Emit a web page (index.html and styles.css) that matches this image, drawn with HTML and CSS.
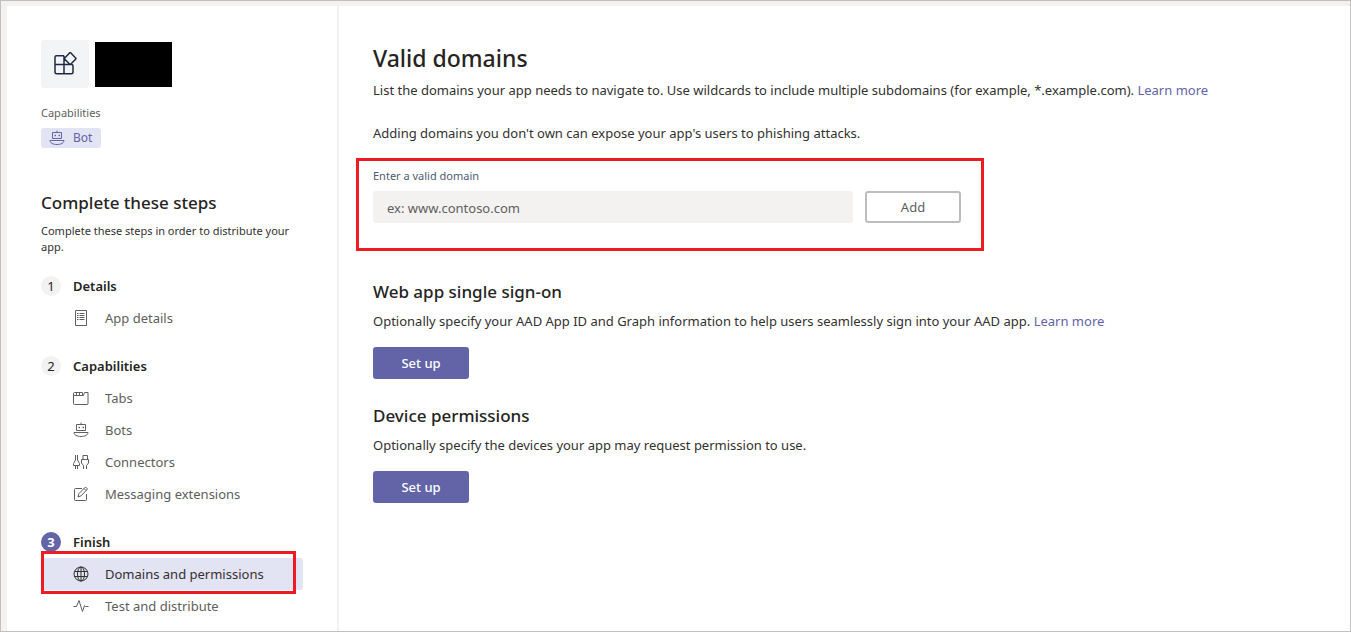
FILE: index.html
```html
<!DOCTYPE html>
<html lang="en">
<head>
<meta charset="utf-8">
<title>Domains and permissions</title>
<link rel="stylesheet" href="styles.css">
</head>
<body>
<svg class="sprite" aria-hidden="true">
  <symbol id="bot" viewBox="0 0 16 16">
    <path d="M8 .5v2M3.500 2.500h9v6h-9zM1 10.500h14c0 2.500-3 4-7 4s-7-1.500-7-4z"/>
    <path d="M5.500 5.500h1.500M9.500 5.500h1.500" stroke-width="1.600"/>
  </symbol>
</svg>
<div class="app">
  <aside class="sidebar">
    <div class="app-header">
      <div class="app-icon">
        <svg viewBox="0 0 24 24" class="app-glyph"><path d="M11 3.700H3.500a1.500 1.500 0 0 0-1.500 1.500v15a1.500 1.500 0 0 0 1.500 1.500h15a1.500 1.500 0 0 0 1.500-1.500V14a1.500 1.500 0 0 0-1.500-1.500H2M11 3.700v18M17.900 .9a1 1 0 0 0-1.400 0L11.800 5.900a1 1 0 0 0 0 1.400l4.700 4.700a1 1 0 0 0 1.400 0L22.600 7.300a1 1 0 0 0 0-1.400z"/></svg>
      </div>
      <div class="app-name"></div>
    </div>
    <div class="label">Capabilities</div>
    <div class="tag"><svg class="icon"><use href="#bot"/></svg>Bot</div>
    <h2 class="title steps-title">Complete these steps</h2>
    <p class="steps-text">Complete these steps in order to distribute your app.</p>
    <nav class="steps">
      <section>
        <h3 class="step"><span class="num">1</span>Details</h3>
        <a class="item" href="#"><svg class="icon" viewBox="0 0 16 16"><path d="M2.500.5h11v15h-11zM6.500 3.500h5M6.500 5.500h5M6.500 7.500h5M6.500 9.500h5M4 3.500h1.500M4 5.500h1.500M4 7.500h1.500M4 9.500h1.500"/></svg>App details</a>
      </section>
      <section>
        <h3 class="step"><span class="num">2</span>Capabilities</h3>
        <a class="item" href="#"><svg class="icon" viewBox="0 0 16 16"><path d="M1.500 2.500h8v3h1l1-3h3.500v11a1 1 0 0 1-1 1H1.500a1 1 0 0 1-1-1V3.500a1 1 0 0 1 1-1M.5 5.500h9M3.500 2.500v3M6.500 2.500v3"/></svg>Tabs</a>
        <a class="item" href="#"><svg class="icon"><use href="#bot"/></svg>Bots</a>
        <a class="item" href="#"><svg class="icon" viewBox="0 0 16 16"><path d="M2.500 1v5L.5 9.500v2h6v-2L4.500 6V1M2.500 11.500V15M4.500 11.500V15M10 1.500h4.500v4H10zM8.500 5.500h7V9L13.500 11.500V15M8.500 5.500V9l2 2.500V15"/></svg>Connectors</a>
        <a class="item" href="#"><svg class="icon" viewBox="0 0 16 16"><path d="M9 2.500H2.500a1 1 0 0 0-1 1v10a1 1 0 0 0 1 1h10a1 1 0 0 0 1-1V8M5 11l1-3.500L12.500 1l2 2L8.200 9.800zM11 2.500l2 2"/></svg>Messaging extensions</a>
      </section>
      <section>
        <h3 class="step"><span class="num current">3</span>Finish</h3>
        <a class="item active" href="#" aria-current="page"><svg class="icon" viewBox="0 0 16 16"><circle cx="8" cy="8" r="7"/><ellipse cx="8" cy="8" rx="3.500" ry="7"/><path d="M1.500 5.500h13M1.500 10.500h13M8 1v14"/></svg>Domains and permissions</a>
        <a class="item" href="#"><svg class="icon" viewBox="0 0 16 16"><path d="M.5 8.500h3l2.500-6 3.500 11 2-6 1 1h3"/></svg>Test and distribute</a>
      </section>
    </nav>
  </aside>
  <main class="main">
    <h1 class="heading">Valid domains</h1>
    <p class="text">List the domains your app needs to navigate to. Use wildcards to include multiple subdomains (for example, *.example.com). <a class="link" href="#">Learn more</a></p>
    <p class="text warning">Adding domains you don't own can expose your app's users to phishing attacks.</p>
    <form class="domain-form">
      <label class="field-label" for="domain">Enter a valid domain</label>
      <div class="field-row">
        <input class="input" id="domain" type="text" placeholder="ex: www.contoso.com">
        <button class="button outline" type="button">Add</button>
      </div>
    </form>
    <section class="block">
      <h2 class="title">Web app single sign-on</h2>
      <p class="text">Optionally specify your AAD App ID and Graph information to help users seamlessly sign into your AAD app. <a class="link" href="#">Learn more</a></p>
      <button class="button" type="button">Set up</button>
    </section>
    <section class="block">
      <h2 class="title">Device permissions</h2>
      <p class="text">Optionally specify the devices your app may request permission to use.</p>
      <button class="button" type="button">Set up</button>
    </section>
  </main>
</div>
</body>
</html>
```
FILE: styles.css
```css
* { box-sizing: border-box; }
body {
  margin: 0;
  font: 13px/20px "Noto Sans", "Open Sans", sans-serif;
  color: #323130;
  background: #fff;
}
h1, h2, h3, p { margin: 0; }
.sprite { position: absolute; width: 0; height: 0; }
.app {
  display: flex;
  min-height: 100vh;
  border: 1px solid #c1c0bf;
  background: linear-gradient(#f3f2f1, #f3f2f1) top / 100% 5px no-repeat;
}
.sidebar {
  flex: 0 0 338px;
  padding: 39px 34px 8px;
  border-left: 6px solid #f3f2f1;
  border-right: 2px solid #f3f2f1;
}
.app-header { display: flex; align-items: center; gap: 6px; }
.app-icon {
  display: grid;
  place-items: center;
  width: 48px;
  height: 48px;
  border-radius: 3px;
  background: #f3f4f6;
}
.app-glyph { width: 24px; height: 24px; fill: none; stroke: #1f2a44; stroke-width: 1.5; }
.app-name { width: 77px; height: 45px; background: #000; }
.label { margin-top: 17px; font-size: 11px; line-height: 16px; color: #605e5c; }
.tag {
  display: flex;
  align-items: center;
  gap: 8px;
  width: 60px;
  height: 20px;
  margin-top: 7px;
  padding-left: 8px;
  border-radius: 3px;
  font-size: 12px;
  color: #6264a7;
  background: #e2e3f3;
}
.icon { flex: none; width: 16px; height: 16px; fill: none; stroke: currentColor; stroke-width: 1; }
.title { font-size: 17px; line-height: 24px; font-weight: 500; color: #252423; }
.steps-title { margin-top: 43px; }
.steps-text { margin-top: 8px; font-size: 11px; line-height: 16px; }
.steps { display: grid; gap: 16px; margin-top: 15px; }
.step { display: flex; align-items: center; gap: 12px; height: 32px; font-size: 13px; font-weight: 600; color: #252423; }
.num {
  width: 20px;
  height: 20px;
  border-radius: 50%;
  text-align: center;
  font-weight: 400;
  background: #f3f2f1;
}
.num.current { color: #fff; font-weight: 700; background: #6264a7; }
.item {
  position: relative;
  display: flex;
  align-items: center;
  gap: 16px;
  height: 32px;
  padding-left: 32px;
  border-radius: 3px;
  color: #605e5c;
  text-decoration: none;
}
.item.active { color: #323130; background: #e2e3f3; }
.item.active::after {
  content: "";
  position: absolute;
  inset: -7px 7px -4px 0;
  border: 3px solid #ed1c24;
}
.main { flex: 1; min-width: 0; padding: 41px 34px; }
.heading { font-size: 23px; line-height: 32px; font-weight: 500; color: #252423; }
.text { margin-top: 6px; }
.text.warning { margin-top: 23px; }
.link { color: #6264a7; text-decoration: none; }
.domain-form {
  width: 628px;
  max-width: 100%;
  margin: 15px 0 0 -17px;
  padding: 7px 20px 25px 14px;
  border: 3px solid #ed1c24;
}
.field-label { display: block; font-size: 11px; line-height: 16px; color: #4f5a73; }
.field-row { display: flex; gap: 12px; margin-top: 7px; }
.input {
  flex: 1;
  min-width: 0;
  height: 32px;
  padding: 2px 14px 0;
  border: 0;
  border-radius: 3px;
  font: inherit;
  color: #252423;
  background: #f3f2f1;
}
.input::placeholder { color: #605e5c; opacity: 1; }
.button {
  width: 96px;
  height: 32px;
  padding: 0;
  border: 0;
  border-radius: 3px;
  font: inherit;
  font-weight: 500;
  color: #fff;
  background: #6264a7;
}
.button.outline { border: 2px solid #bdbdbd; font-weight: 400; color: #605e5c; background: #fff; }
.block { margin-top: 25px; }
.domain-form + .block { margin-top: 29px; }
.block .text { margin-top: 7px; }
.block .button { display: block; margin-top: 16px; }
```
